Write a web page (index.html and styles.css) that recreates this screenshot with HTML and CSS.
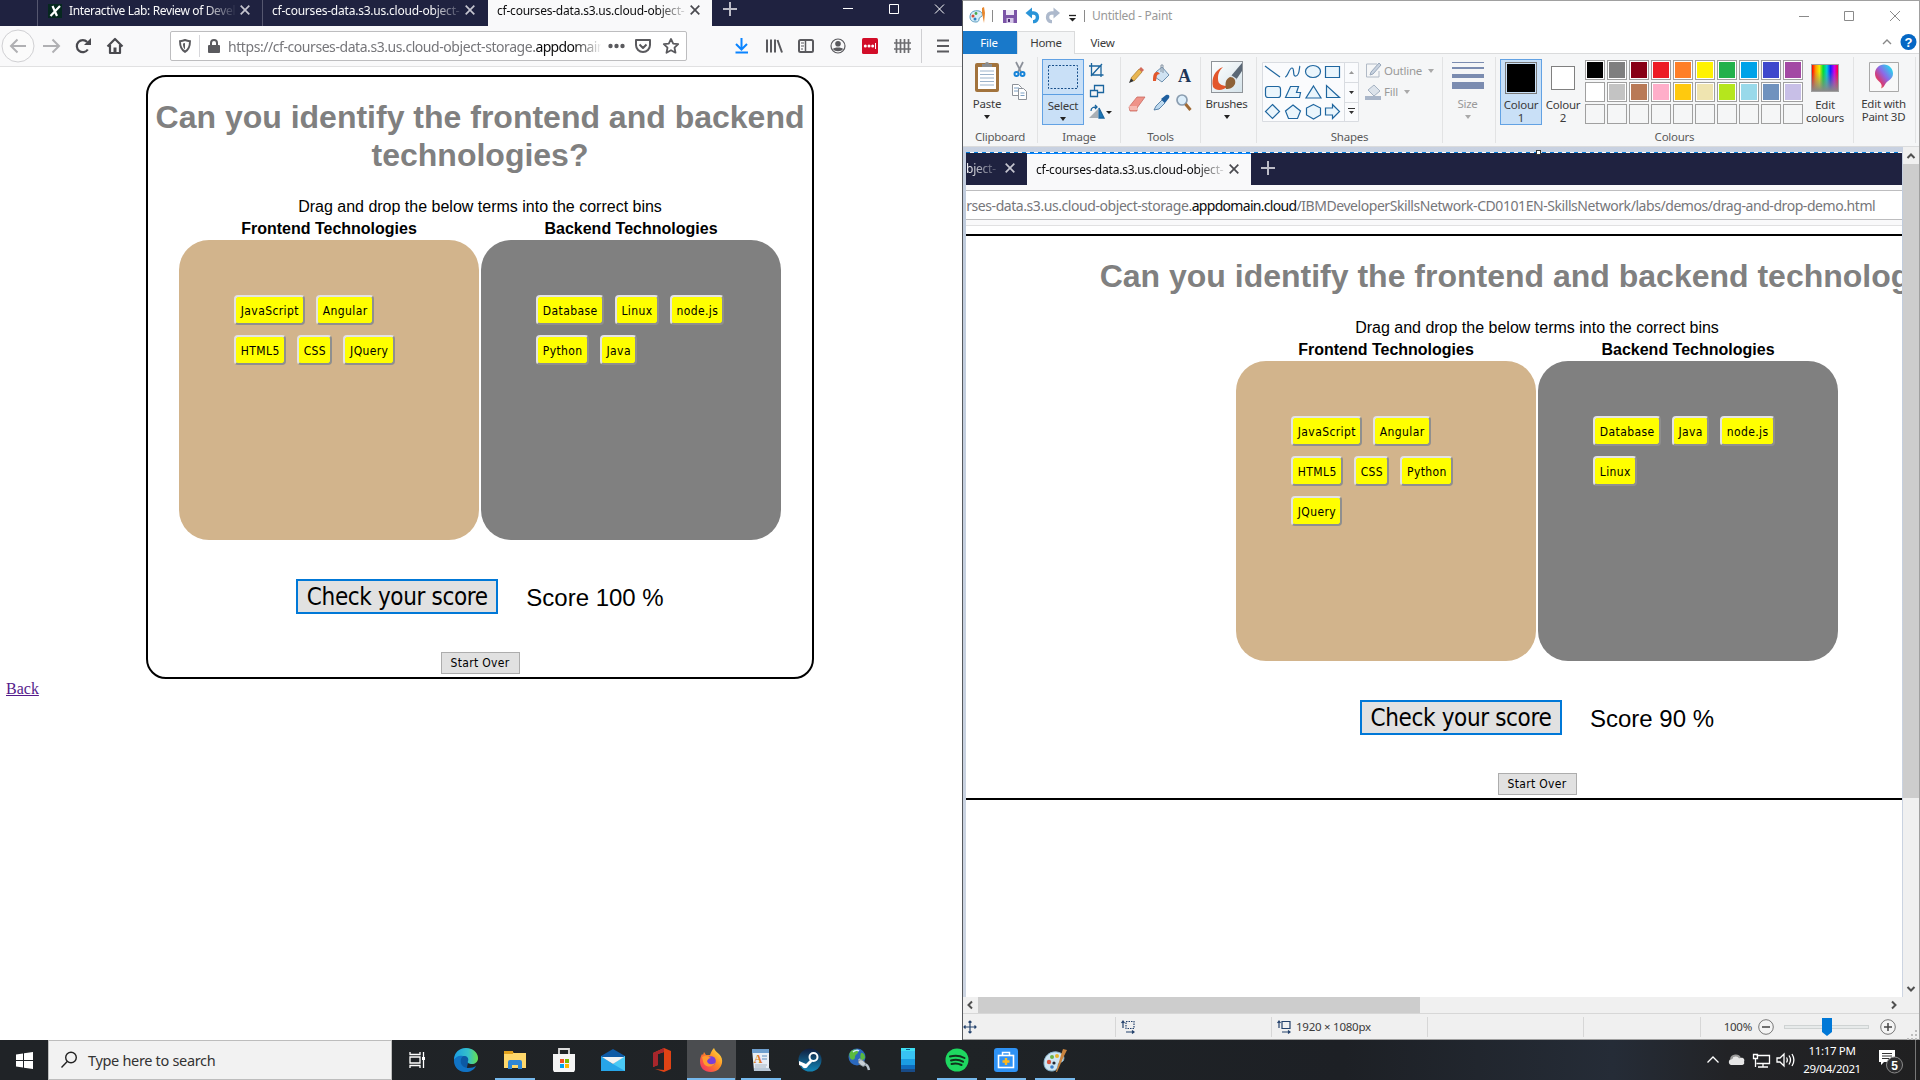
FILE: index.html
```html
<!DOCTYPE html>
<html lang="en">
<head>
<meta charset="utf-8">
<title>Desktop</title>
<link rel="stylesheet" href="styles.css">
</head>
<body>
<main class="desktop">
  <section class="browser">
    <div class="tabbar">
      <div class="tab tab-lead"></div>
      <div class="tab tab-first">
        <svg class="favicon" width="14" height="14" viewBox="0 0 14 14"><rect width="14" height="14" fill="#06281f"/><path d="M4.500 2l4.500 10M12 2L2.500 12" stroke="#fff" stroke-width="2.200"/></svg>
        <span class="tab-text t1">Interactive Lab: Review of Devel</span>
        <svg class="x" width="10" height="10" viewBox="0 0 10 10"><path d="M.7.7l8.600 8.600M9.300.7L.7 9.300"/></svg>
      </div>
      <div class="tab">
        <span class="tab-text">cf-courses-data.s3.us.cloud-object-</span>
        <svg class="x" width="10" height="10" viewBox="0 0 10 10"><path d="M.7.7l8.600 8.600M9.300.7L.7 9.300"/></svg>
      </div>
      <div class="tab tab-on">
        <span class="tab-text">cf-courses-data.s3.us.cloud-object-</span>
        <svg class="x" width="10" height="10" viewBox="0 0 10 10"><path d="M.7.7l8.600 8.600M9.300.7L.7 9.300"/></svg>
      </div>
      <svg class="plus" width="14" height="14" viewBox="0 0 14 14"><path d="M7 0v14M0 7h14"/></svg>
      <svg class="winctl" width="102" height="10" viewBox="0 0 102 10"><path d="M0 4.500h10M46.500.5h9v9h-9zM92 .5l9 9M101 .5l-9 9"/></svg>
    </div>
    <div class="navbar">
      <svg class="navicons" width="130" height="34" viewBox="0 0 130 34" fill="none">
        <circle cx="17" cy="17" r="16" fill="#fbfbfb" stroke="#d0d0d3"/>
        <path d="M25 17H10.500M16.500 10.500L10 17l6.500 6.500" stroke="#b0b0b3" stroke-width="2"/>
        <path d="M42 17h15.500M51.500 10.500L58 17l-6.500 6.500" stroke="#b0b0b3" stroke-width="2"/>
        <path d="M86.800 20.500a6 6 0 1 1-.6-7.500" stroke="#4a4a4f" stroke-width="2.200"/><path d="M83 16h7V9z" fill="#4a4a4f"/>
        <path d="M106.500 17.500l7.500-7.500 7.500 7.500M109 16v8h10v-8" stroke="#4a4a4f" stroke-width="2.200" stroke-linejoin="round"/><path d="M112.500 24v-5.500h3V24z" fill="#4a4a4f"/>
      </svg>
      <div class="urlbox">
        <svg width="12" height="14" viewBox="0 0 12 14"><path d="M1 2.200C3 2 4.500 1.600 6 1c1.500.6 3 1 5 1.200 0 5-.8 8.300-5 10.600C1.800 10.500 1 7.200 1 2.200z" fill="none" stroke="#5a5a5e" stroke-width="1.900"/><path d="M6 4v6.500C4.400 9 4 7 4 4.500z" fill="#5a5a5e"/></svg>
        <i class="urlsep"></i>
        <svg width="12" height="14" viewBox="0 0 12 14"><path d="M3 7V4a3 3 0 0 1 6 0v3" fill="none" stroke="#5a5a5e" stroke-width="2"/><rect y="6" width="12" height="8" rx="1" fill="#5a5a5e"/></svg>
        <span class="url"><span>https://cf-courses-data.s3.us.cloud-object-storage.</span><b>appdomain</b></span>
        <svg class="urlicons" width="74" height="18" viewBox="0 0 74 18"><g fill="#5a5a5e"><circle cx="3.500" cy="9" r="2.200"/><circle cx="9.500" cy="9" r="2.200"/><circle cx="15.500" cy="9" r="2.200"/></g><g fill="none" stroke="#5a5a5e" stroke-width="2" stroke-linejoin="round"><path d="M29 3h14v5a7 7 0 0 1-14 0zM32.500 7.500L36 11l3.500-3.500"/><path d="M64 2l2.200 4.600 5 .6-3.700 3.500 1 5L64 13.200l-4.500 2.500 1-5-3.700-3.500 5-.6z" stroke-width="1.800"/></g></svg>
      </div>
      <svg class="toolicons" width="224" height="34" viewBox="0 0 224 34" fill="none" stroke="#5a5a5e" stroke-width="2">
        <path d="M11.500 9v11M6 15l5.500 5.500L17 15M5.500 23.500h12.500" stroke="#0a84ff"/>
        <path d="M37 10.500v13M41 10.500v13M45 10.500v13M47.500 11l4.500 12.500"/>
        <rect x="69" y="11" width="14" height="12" rx="1.500"/><path d="M75.500 11v12" stroke-width="1.500"/><path d="M71 14h3M71 17h3M71 20h2" stroke-width="1.200"/>
        <circle cx="108" cy="17" r="7" stroke-width="1.200"/><circle cx="108" cy="14.700" r="2.800" fill="#5a5a5e" stroke="none"/><path d="M103 20c1-2 9-2 10 0-1.500 3-8.500 3-10 0z" fill="#5a5a5e" stroke="none"/>
        <rect x="132" y="9" width="16" height="16" rx="1.500" fill="#d20d28" stroke="none"/><g fill="#fff" stroke="none"><circle cx="135.300" cy="17" r="1.500"/><circle cx="139" cy="17" r="1.500"/><circle cx="142.700" cy="17" r="1.500"/><path d="M145 14h1v6h-1z"/></g>
        <path d="M166.500 10v14M170.500 10v14M174.500 10v14M178.500 10v14M164 14h17M164 20h17" stroke-width="1.700" stroke="#6d6d70"/>
        <path d="M191.500 0v34" stroke="#cfcfd2" stroke-width="1"/>
        <path d="M207 11.500h12M207 17h12M207 22.500h12"/>
      </svg>
    </div>
    <div class="page">
      <div class="quiz">
        <h1>Can you identify the frontend and backend<br>technologies?</h1>
        <p>Drag and drop the below terms into the correct bins</p>
        <div class="bins">
          <div class="col"><h2>Frontend Technologies</h2><div class="bin tan"><span class="chip">JavaScript</span><span class="chip">Angular</span><span class="chip">HTML5</span><span class="chip">CSS</span><span class="chip">JQuery</span></div></div>
          <div class="col"><h2>Backend Technologies</h2><div class="bin gray"><span class="chip">Database</span><span class="chip">Linux</span><span class="chip">node.js</span><span class="chip">Python</span><span class="chip">Java</span></div></div>
        </div>
        <div class="scorerow"><button class="check">Check your score</button><span>Score 100 %</span></div>
        <button class="again">Start Over</button>
      </div>
      <a class="back">Back</a>
    </div>
  </section>

  <section class="paint">
    <div class="titlebar">
      <svg class="qat" width="120" height="22" viewBox="0 0 120 22">
        <path d="M2 12c0-5 4-7 9-6 3 1 4 3 3 5-1 1.500-3 1-3 3 0 2-1 3-3 3-4 0-6-2-6-5z" fill="#d7edf8" stroke="#5a9cc0"/><circle cx="5" cy="11" r="1.500" fill="#d84a3a"/><circle cx="8" cy="8.500" r="1.400" fill="#49a84c"/><circle cx="7" cy="14" r="1.500" fill="#2d83c6"/><path d="M14 3l2-1 1 6-1 10-2-10z" fill="#e8872e"/>
        <path d="M24.500 5v12" stroke="#8a8a8a"/>
        <path d="M35 5h14v13H35z" fill="#7c55a7"/><path d="M38 5h8v5h-8z" fill="#eee8f6"/><path d="M38.500 13h7v5h-7z" fill="#d5c7e8"/><path d="M40 14h2v3h-2z" fill="#503078"/>
        <path d="M61 8h4.500a3.700 4.300 0 0 1 .5 8.600h-1" fill="none" stroke="#2a94d8" stroke-width="3.400"/><path d="M57.500 8l6.500-5.500v11z" fill="#2a94d8"/>
        <path d="M88 8h-4.500a3.700 4.300 0 0 0-.5 8.600h1" fill="none" stroke="#adb9cc" stroke-width="3.400"/><path d="M92 8l-6.500-5.500v11z" fill="#adb9cc"/>
        <path d="M101 10.500h7" stroke="#222" stroke-width="1.300"/><path d="M101 13h7l-3.500 3.500z" fill="#222"/>
        <path d="M116.500 5v12" stroke="#8a8a8a"/>
      </svg>
      <span class="ui title">Untitled - Paint</span>
      <svg class="pctl" width="102" height="12" viewBox="0 0 102 12" fill="none" stroke="#8a8a8a"><path d="M0 6.500h10M45.500 1.500h9v9h-9zM91 1l10 10M101 1L91 11"/></svg>
    </div>
    <div class="rtabs">
      <span class="ui file">File</span><span class="ui home">Home</span><span class="ui view">View</span>
      <svg class="help" width="36" height="18" viewBox="0 0 36 18"><path d="M2 11l4-4 4 4" fill="none" stroke="#888" stroke-width="1.400"/><circle cx="27.500" cy="9" r="8" fill="#0567c4"/><text x="27.500" y="14" text-anchor="middle" class="q">?</text></svg>
    </div>
    <div class="ribbon">
      <div class="grp g-clip">
        <div class="rbody">
          <div class="big">
            <svg width="26" height="34" viewBox="0 0 26 34"><rect x="1" y="4" width="24" height="29" rx="2" fill="#a2733c"/><path d="M4 8h18v22H4z" fill="#fff"/><path d="M6 12h14M6 15.500h14M6 19h14M6 22.500h14M6 26h14" stroke="#9cb3ca"/><path d="M8 8V5h3a2 2 0 0 1 4 0h3v3z" fill="#8a8d90"/></svg>
            <span class="ui">Paste</span><i class="dn"></i>
          </div>
          <svg class="side" width="18" height="44" viewBox="0 0 18 44"><path d="M5 2l5 10M12 2L7 12" stroke="#8b9099" stroke-width="1.700"/><g fill="none" stroke="#1683d8" stroke-width="2"><circle cx="5.500" cy="14" r="2"/><circle cx="11.500" cy="14" r="2"/></g><g fill="#fff" stroke="#8d9299"><path d="M1.500 24.500h6l3 3v8h-9z"/><path d="M7.500 28.500h5l3 3v8h-8z"/></g><path d="M3 28h5M3 31h4M9.500 33h4M9.500 35.500h4" stroke="#7da0c4"/></svg>
        </div>
        <span class="ui lbl">Clipboard</span>
      </div>
      <div class="grp g-image">
        <div class="rbody">
          <div class="big on">
            <svg width="40" height="36" viewBox="0 0 40 36"><rect x="5.500" y="6.500" width="29" height="23" fill="none" stroke="#174f8a" stroke-dasharray="2 1.500"/><path d="M0 35.500h40" stroke="#5b9ee2"/></svg>
            <span class="ui">Select</span><i class="dn"></i>
          </div>
          <svg class="side2" width="26" height="62" viewBox="0 0 26 62" fill="none" stroke="#1b659e" stroke-width="1.300"><path d="M3.500 2v12h12M1 5h12v11M3 15L14 3"/><path d="M6.500 24.500h9v7h-9z"/><path d="M2.500 29.500h7v6h-7z" fill="#f5f6f7"/><path d="M1 57l9-9v9z" fill="#a9afb5" stroke="none"/><path d="M11 47v10h5z" fill="#1b77b8"/><path d="M3 50c0-4 3-4 6-4M7 44l2 2-2 2"/><path d="M18 50h6l-3 3z" fill="#222" stroke="none"/></svg>
        </div>
        <span class="ui lbl">Image</span>
      </div>
      <div class="grp g-tools">
        <svg width="66" height="62" viewBox="0 0 66 62">
          <path d="M1 26l2-5 3 3z" fill="#333"/><path d="M3 21l8-9 3 3-8 9z" fill="#e9b651" stroke="#a87a2c" stroke-width=".7"/><path d="M11 12l2-2 3 3-2 2z" fill="#d46a5a"/>
          <path d="M28 15l6-5 7 8-7 7-7-5z" fill="#cfe2f2" stroke="#6c8fae"/><path d="M25 24c0-7 1-9 5-9l2 2c-4 0-3 3-4 7z" fill="#e2572c"/><path d="M33 15V8h2v8" fill="none" stroke="#8694a3"/>
          <text x="56.500" y="25" text-anchor="middle" class="bigA">A</text>
          <path d="M1 50l8-10h8l-8 11v3H2z" fill="#ef9389" stroke="#c96a61" stroke-width=".8"/><path d="M1 49h8v4H2z" fill="#f7bab2"/>
          <path d="M26 53l2-4 6-6 3 3-6 6z" fill="#bdd9ef" stroke="#3c6c98" stroke-width=".8"/><path d="M33 42l5-4c3-1 4 1 3 3l-4 5z" fill="#1f5f9f"/>
          <circle cx="54" cy="43" r="5" fill="#dceefb" stroke="#8a9db0" stroke-width="1.700"/><path d="M57.500 47l5 6" stroke="#a06a35" stroke-width="3"/>
        </svg>
        <span class="ui lbl">Tools</span>
      </div>
      <div class="grp g-brush">
        <div class="big">
          <svg width="32" height="34" viewBox="0 0 32 34"><defs><linearGradient id="bb" x2="1" y2="1"><stop stop-color="#fff"/><stop offset="1" stop-color="#d5e3ea"/></linearGradient></defs><rect x=".5" y="2.500" width="31" height="31" fill="url(#bb)" stroke="#8f9499"/><path d="M12 8C4 11 0 19 2 28c3 4 10 4 15-1-5 0-10-1-10-7 0-5 1-8 5-12z" fill="#e2562b"/><path d="M31 4L20 17l5 4 6-9z" fill="#5b6876"/><path d="M20 16l6 4-2 3-6-4z" fill="#dde3e8"/><path d="M15 30c-1-4-1-10 4-12 4 0 6 3 5 7-2 4-5 5-9 5z" fill="#8d6238"/></svg>
          <span class="ui">Brushes</span><i class="dn"></i>
        </div>
      </div>
      <div class="grp g-shapes">
        <div class="rbody">
          <svg width="98" height="60" viewBox="0 0 98 60"><path d="M.5.500h96v59H.5zM82.500 0v60M82.500 20.500h14M82.500 40.500h14" fill="#fafbfd" stroke="#d9dce1"/><g fill="#eaf5fc" stroke="#1f669f" stroke-width="1.200"><path d="M3 4l15 11"/><path d="M23 15c3 0 4-9 7-9s0 9 4 8 3-9 4-10" fill="none"/><ellipse cx="51" cy="9.500" rx="7.500" ry="6"/><path d="M63.500 4.500h14v11h-14z"/><rect x="3.500" y="24.500" width="15" height="11" rx="2.500"/><path d="M23.500 35.500l5-11h8l-2 6h4l-1 5z"/><path d="M51.500 24l7.500 12H44z"/><path d="M64.500 23.500v12h13z"/><path d="M10.500 42.500l7 7-7 7-7-7z"/><path d="M31 43l7.500 6-3 7.500h-9l-3-7.500z"/><path d="M51.500 42.500l7 3.500v7l-7 4-7-4v-7z"/><path d="M63.500 46h7v-3.500l7 7-7 7V53h-7z"/></g><path d="M87 12h5l-2.500-3z" fill="#999"/><path d="M87 29h5l-2.500 3zM87 49h5l-2.500 3z" fill="#333"/><path d="M86 46.500h7" stroke="#333"/></svg>
          <div class="ofcol">
            <div class="of"><svg width="18" height="17" viewBox="0 0 18 17"><path d="M12 2H1.500v13H14V9" fill="none" stroke="#b1bac6"/><path d="M5 13l1-3 8-9 2 2-8 9z" fill="#c8d2df" stroke="#99a8bb"/></svg><span class="ui dim">Outline</span><i class="dn d"></i></div>
            <div class="of"><svg width="18" height="17" viewBox="0 0 18 17"><path d="M3 7l6-5 6 6-6 5z" fill="#dce3eb" stroke="#a5b2c2"/><path d="M1 12h3M0 13h16v4H0z" fill="#a9b6c9"/></svg><span class="ui dim">Fill</span><i class="dn d"></i></div>
          </div>
        </div>
        <span class="ui lbl">Shapes</span>
      </div>
      <div class="grp g-size">
        <div class="big"><svg width="32" height="34" viewBox="0 0 32 34"><path d="M0 3h32v1H0zM0 8h32v2H0zM0 15h32v4H0zM0 23h32v7H0z" fill="#7b8cb0"/></svg><span class="ui dim">Size</span><i class="dn d"></i></div>
      </div>
      <div class="grp g-col">
        <div class="rbody">
          <div class="big on"><i class="sw1"></i><span class="ui">Colour</span><span class="ui">1</span></div>
          <div class="big c2"><i class="sw2"></i><span class="ui">Colour</span><span class="ui">2</span></div>
          <div class="palette">
            <i style="background:#000"></i><i style="background:#7f7f7f"></i><i style="background:#880015"></i><i style="background:#ed1c24"></i><i style="background:#ff7f27"></i><i style="background:#fff200"></i><i style="background:#22b14c"></i><i style="background:#00a2e8"></i><i style="background:#3f48cc"></i><i style="background:#a349a4"></i>
            <i style="background:#fff"></i><i style="background:#c3c3c3"></i><i style="background:#b97a57"></i><i style="background:#ffaec9"></i><i style="background:#ffc90e"></i><i style="background:#efe4b0"></i><i style="background:#b5e61d"></i><i style="background:#99d9ea"></i><i style="background:#7092be"></i><i style="background:#c8bfe7"></i>
            <i class="e"></i><i class="e"></i><i class="e"></i><i class="e"></i><i class="e"></i><i class="e"></i><i class="e"></i><i class="e"></i><i class="e"></i><i class="e"></i>
          </div>
          <div class="big ec"><i class="rainbow"></i><span class="ui">Edit</span><span class="ui">colours</span></div>
        </div>
        <span class="ui lbl">Colours</span>
      </div>
      <div class="grp g-3d">
        <div class="big"><svg width="30" height="34" viewBox="0 0 30 34"><defs><linearGradient id="p3" x1="1" y1="0" x2="0" y2="1"><stop offset=".1" stop-color="#21dcee"/><stop offset=".45" stop-color="#8b6be8"/><stop offset=".7" stop-color="#d43a78"/><stop offset="1" stop-color="#ffb52b"/></linearGradient></defs><path d="M.5 3.500h29v29H.5z" fill="#f8f8f8" stroke="#a9a9a9"/><path d="M15 5.500c5 0 9 4 9 9 0 6-5 6-8 11-1 2-2 3-4 4 2-4-1-6-3-8-2-2-3-4-3-7 0-5 4-9 9-9z" fill="url(#p3)"/></svg><span class="ui">Edit with</span><span class="ui">Paint 3D</span></div>
      </div>
    </div>
    <div class="workspace">
      <div class="view-area">
        <i class="handle"></i>
        <div class="canvas">
          <div class="tabbar">
            <div class="tab tab-cut"><span class="tab-text">bject-</span><svg class="x" width="10" height="10" viewBox="0 0 10 10"><path d="M.7.7l8.600 8.600M9.300.7L.7 9.300"/></svg></div>
            <div class="tab tab-on"><span class="tab-text">cf-courses-data.s3.us.cloud-object-</span><svg class="x" width="10" height="10" viewBox="0 0 10 10"><path d="M.7.7l8.600 8.600M9.300.7L.7 9.300"/></svg></div>
            <svg class="plus" width="14" height="14" viewBox="0 0 14 14"><path d="M7 0v14M0 7h14"/></svg>
          </div>
          <div class="navbar"><div class="urlwide"><span class="url"><span>urses-data.s3.us.cloud-object-storage.</span><b>appdomain.cloud</b><span>/IBMDeveloperSkillsNetwork-CD0101EN-SkillsNetwork/labs/demos/drag-and-drop-demo.html</span></span></div></div>
          <div class="quiz wide">
            <h1>Can you identify the frontend and backend technologies?</h1>
            <p>Drag and drop the below terms into the correct bins</p>
            <div class="bins">
              <div class="col"><h2>Frontend Technologies</h2><div class="bin tan"><span class="chip">JavaScript</span><span class="chip">Angular</span><span class="chip">HTML5</span><span class="chip">CSS</span><span class="chip">Python</span><span class="chip">JQuery</span></div></div>
              <div class="col"><h2>Backend Technologies</h2><div class="bin gray"><span class="chip">Database</span><span class="chip">Java</span><span class="chip">node.js</span><span class="chip">Linux</span></div></div>
            </div>
            <div class="scorerow"><button class="check">Check your score</button><span>Score 90 %</span></div>
            <button class="again">Start Over</button>
          </div>
        </div>
      </div>
      <div class="vscroll">
        <svg width="16" height="17" viewBox="0 0 16 17"><path d="M4.500 11L8 7.500l3.500 3.500" fill="none" stroke="#505050" stroke-width="2"/></svg>
        <i></i>
        <svg class="end" width="16" height="17" viewBox="0 0 16 17"><path d="M4.500 7L8 10.500 11.500 7" fill="none" stroke="#505050" stroke-width="2"/></svg>
      </div>
    </div>
    <div class="hscroll">
      <svg width="14" height="16" viewBox="0 0 14 16"><path d="M8 4.500L4.500 8 8 11.500" fill="none" stroke="#505050" stroke-width="2"/></svg>
      <i></i>
      <svg class="end" width="16" height="16" viewBox="0 0 16 16"><path d="M6 4.500L9.500 8 6 11.500" fill="none" stroke="#505050" stroke-width="2"/></svg>
    </div>
    <div class="status">
      <div class="cell c-a"><svg width="14" height="14" viewBox="0 0 14 14" fill="none" stroke="#24426c" stroke-width="1.200"><path d="M7 1v12M1 7h12M5.500 2.500L7 1l1.500 1.500M5.500 11.500L7 13l1.500-1.500M2.500 5.500L1 7l1.500 1.500M11.500 5.500L13 7l-1.500 1.500"/></svg></div>
      <div class="cell"><svg width="15" height="14" viewBox="0 0 15 14" fill="none" stroke="#24426c" stroke-width="1.200"><path d="M2 1v7M.5 3L2 1l1.500 2M5 12h8M11 10.500l2 1.500-2 1.500"/><path d="M5 1.500h8v7H5z" stroke-dasharray="1.500 1"/></svg></div>
      <div class="cell"><svg width="15" height="14" viewBox="0 0 15 14" fill="none" stroke="#24426c" stroke-width="1.200"><path d="M2 1v7M.5 3L2 1l1.500 2M5 12h8M11 10.500l2 1.500-2 1.500M5 1.500h8v7H5z"/></svg><span class="ui px">1920 × 1080px</span></div>
      <div class="cell"></div>
      <div class="cell c-e"></div>
      <div class="zoom"><span class="ui px">100%</span>
        <svg width="167" height="26" viewBox="0 0 167 26"><g fill="#f4f4f4" stroke="#777"><circle cx="14" cy="13" r="7.300"/><circle cx="136" cy="13" r="7.300"/></g><path d="M10 13h8M132 13h8M136 9v8" stroke="#444" stroke-width="1.500"/><rect x="32.500" y="11.500" width="84" height="3" fill="#e7eaea" stroke="#cfd3d3"/><path d="M70 4h10v14l-5 4-5-4z" fill="#0078d7"/><path d="M163 16h2v2h-2zM163 20h2v2h-2zM163 24h2v2h-2zM159 20h2v2h-2zM159 24h2v2h-2zM155 24h2v2h-2z" fill="#bcbcbc"/></svg>
      </div>
    </div>
  </section>

  <footer class="taskbar">
    <div class="start"><svg width="17" height="17" viewBox="0 0 17 17" fill="#fff"><path d="M0 2.500l7-1V8H0zM8 1.300L17 0v8H8zM0 9h7v6.500l-7-1zM8 9h9v8l-9-1.300z"/></svg></div>
    <div class="search"><svg width="18" height="18" viewBox="0 0 18 18" fill="none" stroke="#222" stroke-width="1.400"><circle cx="11" cy="6.500" r="5.300"/><path d="M7.200 10.500L1.500 16.500"/></svg><span>Type here to search</span></div>
    <div class="apps">
      <div class="app"><svg width="18" height="18" viewBox="0 0 18 18" fill="none" stroke="#fff" stroke-width="1.300"><path d="M2 1v2.500h10V1M2 17v-2.500h10V17M2 6h10v6H2zM15.500 1v16"/><path d="M14 6h3v3h-3z" fill="#fff" stroke="none"/></svg></div>
      <div class="app"><svg width="24" height="24" viewBox="0 0 24 24"><defs><linearGradient id="e1" x2="1"><stop stop-color="#1b9de2"/><stop offset=".6" stop-color="#35c1c9"/><stop offset="1" stop-color="#67e04b"/></linearGradient></defs><circle cx="12" cy="12" r="12" fill="#0c59a4"/><path d="M12 24c7 0 10-3 11-6 2-4 1-2 1-6l-9-2z" fill="#202327"/><path d="M0 12C0 4 6 0 12 0s12 4 12 10c0 4-3 6-6 6-3 0-5-1-4-3 1-3-1-5-4-5C5 8 2 10 0 12z" fill="url(#e1)"/><path d="M0 12c2-4 6-5 9-4-4 3-3 12 5 12 4 0 6-1 8-2-2 4-6 6-10 6C5 24 0 20 0 12z" fill="#1173c4"/></svg></div>
      <div class="app run"><svg width="22" height="20" viewBox="0 0 22 20"><path d="M0 1h8l2 2H0z" fill="#d89614"/><path d="M0 3h22v15H0z" fill="#ffd86b"/><path d="M0 1h9v3H0z" fill="#e2a21d"/><path d="M4 19v-7q0-2 2-2h10q2 0 2 2v7h-4v-4H8v4z" fill="#2f86d6"/></svg></div>
      <div class="app"><svg width="24" height="24" viewBox="0 0 24 24"><path d="M7 8V1h10v7" fill="none" stroke="#ddd" stroke-width="1.800"/><path d="M1 6h22v16l-1 2H2l-1-2z" fill="#f5f5f5"/><path d="M8 11h4v4H8z" fill="#f25022"/><path d="M13 11h4v4h-4z" fill="#7fba00"/><path d="M8 16h4v4H8z" fill="#00a4ef"/><path d="M13 16h4v4h-4z" fill="#ffb900"/></svg></div>
      <div class="app"><svg width="24" height="24" viewBox="0 0 24 24"><path d="M0 8l12-7 12 7v6H0z" fill="#0f5aa5"/><path d="M0 8l12 8 12-8v15H0z" fill="#27a5e8"/><path d="M24 8v15L12 16z" fill="#4ac9f5"/><path d="M1 9h22l-11 7z" fill="#f3f3f3"/></svg></div>
      <div class="app"><svg width="20" height="24" viewBox="0 0 20 24"><path d="M12 0l7 3v18l-7 3-9-3 9 1V4L6 6v11l-5 2V5z" fill="#df4315"/><path d="M12 0v4L6 6v11l-5 2V5z" fill="#a8262c"/></svg></div>
      <div class="app run active"><svg width="24" height="24" viewBox="0 0 24 24"><defs><linearGradient id="ff" x1="1" y1="0" x2="0" y2="1"><stop stop-color="#fff04a"/><stop offset=".45" stop-color="#ff8a22"/><stop offset="1" stop-color="#f0246c"/></linearGradient></defs><path d="M15 0c1 3 3 4 5 6 3 3 3.500 6 3 9-1 5-5 9-11 9C5 24 1 20 1 13c0-3 1-5 2-7l1 1 1-3 2 3h4c1-3 2-5 4-7z" fill="url(#ff)"/><circle cx="12" cy="13" r="4.800" fill="#7a3fd8"/><path d="M3 9c3-2 6-1 9 1-2 0-3 1-4 3 1 4 5 4 8 2-2 5-11 5-12-2z" fill="#ff9a2e"/></svg></div>
      <div class="app run"><svg width="20" height="24" viewBox="0 0 20 24"><path d="M1 1h17v19l2 3H3z" fill="#e8eef5"/><path d="M1 1h17v4H1z" fill="#6e9fcf"/><text x="7" y="15" text-anchor="middle" class="wp">A</text><path d="M11 8h5M11 11h5" stroke="#5b8cc0"/><path d="M4 17h12M4 19h11" stroke="#a9b6c4"/><path d="M3 20h15l2 3H3z" fill="#b9c7d6"/></svg></div>
      <div class="app"><svg width="24" height="24" viewBox="0 0 24 24"><defs><linearGradient id="st" x2="0" y2="1"><stop stop-color="#111d3d"/><stop offset="1" stop-color="#1387b8"/></linearGradient></defs><circle cx="12" cy="12" r="11.500" fill="url(#st)"/><circle cx="15.500" cy="9" r="4" fill="none" stroke="#fff" stroke-width="2"/><path d="M1 13l7 3 4-4 3 1-5 5c-1 3-5 3-6 0l-3-1z" fill="#fff"/></svg></div>
      <div class="app"><svg width="24" height="24" viewBox="0 0 24 24"><circle cx="10" cy="9" r="8.500" fill="#2a68bd"/><path d="M4 3c3-2 6-2 7 0 1 3-3 3-3 6s-3 4-5 1c-1-3-1-5 1-7zM14 5c3 0 4 2 4 5l-3 3c-2-2-2-5-1-8z" fill="#5bbb3f"/><path d="M6 4c2-2 5-2 6-1" stroke="#cfeaff" stroke-width="1.500" fill="none"/><path d="M12 11l4 5c4 0 5 2 6 6" fill="none" stroke="#b9c3cc" stroke-width="2.500"/><ellipse cx="15" cy="15" rx="4" ry="2.500" transform="rotate(40 15 15)" fill="#c9d1d8" stroke="#7f8a94" stroke-width=".8"/></svg></div>
      <div class="app"><svg width="14" height="24" viewBox="0 0 14 24"><path d="M0 0h14v24H0z" fill="#38c3f3"/><path d="M0 0h14v3H0z" fill="#3fe0f5"/><path d="M0 11h14v6H0z" fill="#1b9de2"/><path d="M0 17h14v4H0z" fill="#0f6cbd"/><path d="M0 21h14v3H0z" fill="#184b87"/><path d="M5 1.500h4" stroke="#0c5e90"/></svg></div>
      <div class="app run"><svg width="24" height="24" viewBox="0 0 24 24"><circle cx="12" cy="12" r="11.500" fill="#1ed760"/><path d="M5 8.500c5-1.500 10-1 14.500 1.500M6 12.500c4-1.200 8.500-.8 12 1.200M6.500 16c3.500-.9 7-.6 10 1" fill="none" stroke="#11301c" stroke-width="2" stroke-linecap="round"/></svg></div>
      <div class="app run"><svg width="24" height="24" viewBox="0 0 24 24"><rect width="24" height="24" rx="3" fill="#2e92f5"/><path d="M8.500 7V4.500h7V7" fill="none" stroke="#fff" stroke-width="1.500"/><rect x="4.500" y="7.500" width="15" height="12" fill="#2e92f5" stroke="#fff" stroke-width="1.600"/><path d="M12 10v7M8.500 13.500h7" stroke="#ffb81c" stroke-width="2.400"/></svg></div>
      <div class="app run"><svg width="24" height="24" viewBox="0 0 24 24"><path d="M1 15C1 8 7 3 14 4c7 1 8 6 6 9-2 2-5 1-5 4s-2 6-6 6c-5 0-8-3-8-8z" fill="#cfe6f3" stroke="#87b2cc"/><circle cx="6" cy="14" r="2.200" fill="#d9533e"/><circle cx="9" cy="9" r="2" fill="#6bb348"/><circle cx="14" cy="8" r="2" fill="#e8b42c"/><circle cx="11" cy="15" r="1.600" fill="#252a33"/><circle cx="9" cy="19" r="1.800" fill="#3c7fc8"/><path d="M20 1l4 1-3 6-7 16-1 0 5-17z" fill="#c9843f"/></svg></div>
    </div>
    <div class="tray">
      <svg width="90" height="20" viewBox="0 0 90 20" fill="none" stroke="#fff" stroke-width="1.300"><path d="M1.500 12.500L7 7l5.500 5.500"/><path d="M25 15c-3-1-3-6 1-6 1-4 6-5 8-1 4-1 5 2 4 4 1 2-1 3-2 3z" fill="#e6e6e6" stroke="none"/><path d="M25 9c1-4 7-5 9-1" stroke="#9a9a9a" stroke-width="2"/><path d="M50.500 5.500h13v8h-13M57 14v3M52 17h10M47.500 4.500h4v4h-4zM49.500 9v8"/><path d="M71 8h3l4-4v12l-4-4h-3zM80.500 7.500c1 1.500 1 3.500 0 5M83 5.500c2 3 2 6 0 9M86 4c2.500 4 2.500 8 0 12"/></svg>
      <div class="clock"><span>11:17 PM</span><span>29/04/2021</span></div>
      <svg class="note" width="28" height="28" viewBox="0 0 28 28"><path d="M1 4h16v12H6l-3 3v-3H1z" fill="#fff"/><path d="M4 7.500h10M4 10h10M4 12.500h7" stroke="#333"/><circle cx="16.500" cy="19" r="8" fill="#2d2d2f" stroke="#8a8a8a"/><text x="16.500" y="23.500" text-anchor="middle" class="badge">5</text></svg>
    </div>
  </footer>
</main>
</body>
</html>
```
FILE: styles.css
```css
* { box-sizing: border-box; }
body { margin: 0; overflow: hidden; background: #fff; font-family: "Liberation Sans", Arial, sans-serif; }
svg { display: block; flex: none; }
i { display: block; flex: none; }
.desktop { width: 1920px; height: 1080px; display: grid; grid-template: 1040px 40px / 962px 958px; overflow: hidden; }

/* Browser chrome */
.tabbar { display: flex; background: #1f2240; color: #f9f9fa; overflow: hidden; }
.browser { overflow: hidden; background: #fff; }
.browser .tabbar { height: 26px; }
.tab { width: 225px; flex: none; display: flex; align-items: center; padding: 0 12px 4px 9px; border-left: 1px solid #55576f; }
.tab-lead { width: 37px; border: 0; }
.tab-first { padding-left: 10px; }
.favicon { margin: 0 7px 0 0; }
.tab-text { flex: none; width: 190px; overflow: hidden; white-space: nowrap; font: 12px/18px "Noto Sans", sans-serif; letter-spacing: -.22px; -webkit-mask-image: linear-gradient(90deg, #000 160px, transparent 192px); mask-image: linear-gradient(90deg, #000 160px, transparent 192px); }
.t1 { width: 166px; letter-spacing: -.37px; -webkit-mask-image: linear-gradient(90deg, #000 135px, transparent 168px); mask-image: linear-gradient(90deg, #000 135px, transparent 168px); }
.x { margin-left: auto; margin-top: -2px; fill: none; stroke: #c5c5cf; stroke-width: 1.7; }
.tab-on { background: #f9f9fa; color: #0c0c0d; border: 0; }
.browser .tab-on { width: 224px; margin-left: 1px; }
.tab-on .x { stroke: #4a4a4f; }
.plus { margin: 2px 0 0 11px; fill: none; stroke: #bdbdc7; stroke-width: 2; }
.winctl { margin: 4px 0 0 106px; fill: none; stroke: #fff; }
.navbar { background: #f9f9fa; border-bottom: 1px solid #e1e1e2; }
.browser .navbar { height: 41px; display: flex; align-items: center; padding-left: 1px; }
.urlbox { width: 517px; height: 30px; margin-left: 39px; display: flex; align-items: center; padding-left: 8px; background: #fff; border: 1px solid #bdbdbf; border-radius: 2px; }
.urlsep { width: 1px; height: 22px; margin: 0 8px; background: #d7d7db; }
.url { white-space: nowrap; color: #76767a; font: 14px/20px "Noto Sans", sans-serif; letter-spacing: -.435px; }
.url b { font-weight: 400; color: #0c0c0d; letter-spacing: -.7px; }
.urlbox .url { margin-left: 8px; padding-top: 2px; width: 373px; overflow: hidden; -webkit-mask-image: linear-gradient(90deg, #000 345px, transparent 374px); mask-image: linear-gradient(90deg, #000 345px, transparent 374px); }
.urlicons { margin-left: 6px; }
.toolicons { margin-left: 43px; }

/* Quiz */
.page { padding: 8px 6px 0; }
.quiz { width: 668px; height: 604px; margin: 0 auto; border: 2px solid #000; border-radius: 20px; display: flex; flex-direction: column; align-items: center; white-space: nowrap; }
.page .quiz { margin-left: 140px; }
.quiz h1 { margin: 21px 0 0; font-size: 32px; line-height: 38px; color: gray; text-align: center; }
.quiz p { margin: 24px 0 0; font-size: 16px; line-height: 18px; }
.bins { display: flex; gap: 2px; margin-top: 4px; }
.col h2 { margin: 0 0 2px; font-size: 16px; line-height: 18px; text-align: center; }
.bin { width: 300px; height: 300px; border-radius: 30px; padding: 55px; display: flex; flex-wrap: wrap; gap: 10px 11px; align-content: flex-start; }
.tan { background: #d2b48c; }
.gray { background: gray; }
.chip { height: 30px; padding: 0 4.2px 0 4.8px; line-height: 28px; border: 2px outset #e3e3e3; border-radius: 4px; background: #ff0; font-family: "DejaVu Sans Condensed", "DejaVu Sans", sans-serif; font-size: 12px; font-stretch: condensed; letter-spacing: .39px; }
.scorerow { display: flex; align-items: center; gap: 28px; margin-top: 39px; height: 35px; font-size: 24px; }
.scorerow span { padding-top: 2px; }
button { padding: 0; color: #000; background: #e1e1e1; font-family: "DejaVu Sans Condensed", "DejaVu Sans", sans-serif; font-stretch: condensed; white-space: nowrap; }
.check { width: 202px; height: 35px; padding-top: 2px; border: 2px solid #0078d7; font-size: 24px; line-height: 29px; letter-spacing: -.36px; }
.again { width: 79px; height: 22px; margin-top: 38px; padding-top: 1px; border: 1px solid #adadad; font-size: 12px; line-height: 19px; letter-spacing: .32px; }
.back { display: block; font: 16px/20px "Liberation Serif", serif; color: #551a8b; text-decoration: underline; }

/* Paint */
.paint { display: flex; flex-direction: column; overflow: hidden; border-left: 1px solid #55585c; border-right: 1px solid #a0a0a0; border-top: 1px solid #a0a0a0; background: #fff; }
.ui { font: 11.5px/14px "Noto Sans", sans-serif; letter-spacing: -.25px; color: #3b3b3b; white-space: nowrap; }
.titlebar { height: 30px; display: flex; align-items: center; padding-left: 5px; }
.titlebar .title { color: #999; margin-left: 4px; font-size: 12px; }
.pctl { margin-left: auto; margin-right: 18px; }
.rtabs { height: 23px; display: flex; flex: none; line-height: 23px; border-bottom: 1px solid #dadbdc; }
.rtabs .ui { height: 23px; line-height: 24px; text-align: center; }
.rtabs .file { width: 54px; padding-right: 2px; background: #1979ca; color: #fff; }
.rtabs .home { width: 58px; background: #f5f6f7; border: 1px solid #dadbdc; border-bottom: 0; line-height: 22px; }
.rtabs .view { width: 55px; }
.help { margin: 2px 2px 0 auto; }
.q { font: bold 13px "Liberation Sans", sans-serif; fill: #fff; }
.ribbon { height: 93px; flex: none; display: flex; padding-top: 3px; background: #f5f6f7; border-bottom: 1px solid #dadbdc; }
.grp { height: 86px; flex: none; display: flex; flex-direction: column; align-items: center; border-right: 1px solid #e2e3e4; }
.rbody { display: flex; width: 100%; height: 72px; }
.grp .lbl { height: 14px; line-height: 16px; color: #5a5a5a; margin-top: auto; }
.big { width: 42px; height: 66px; margin-top: 2px; display: flex; flex-direction: column; align-items: center; flex: none; }
.big svg { margin-bottom: 4px; }
.big .ui { line-height: 13px; }
.on { background: #c9e0f7; border: 1px solid #62a2e4; }
.big.on svg { margin-top: -1px; }
.dn { border: 3.5px solid transparent; border-top: 4px solid #222; border-bottom: 0; margin-top: 5px; }
.dn.d { border-top-color: #a9a9a9; }
.g-clip { width: 75px; }
.g-clip .big { margin-left: 3px; }
.side { margin: 3px 0 0 3px; }
.g-image { width: 83px; }
.g-image .big { margin-left: 4px; }
.side2 { margin: 4px 0 0 4px; }
.g-tools { width: 80px; }
.bigA { font: bold 18px "Liberation Serif", serif; fill: #1d3557; }
.g-brush { width: 56px; }
.g-brush .big { margin-right: 4px; }
.g-shapes { width: 186px; }
.g-shapes .rbody { padding: 5px 0 0 5px; }
.ofcol { margin: -2px 0 0 5px; }
.of { display: flex; align-items: center; height: 21px; gap: 1px; }
.of .dn { margin: 0 0 0 5px; }
.dim { color: #9a9a9a; }
.g-size { width: 53px; }
.g-size .big { margin-right: 3px; }
.g-col { width: 358px; }
.g-col .rbody .big.on { margin-left: 4px; }
.sw1 { width: 32px; height: 32px; margin: 2px 0 4px; background: #000; border: 1px solid #7b7b7b; box-shadow: inset 0 0 0 1px #c9e0f7; }
.sw2 { width: 24px; height: 24px; margin: 7px 0 8px; background: #fff; border: 1px solid #808080; }
.palette { display: grid; grid-template-columns: repeat(10, 20px); grid-auto-rows: 20px; gap: 2px; margin: 3px 0 0 1px; height: 64px; }
.palette i { border: 1px solid #a0a0a0; box-shadow: inset 0 0 0 1px #fff; }
.palette .e { box-shadow: none; }
.ec { margin-left: 1px; }
.rainbow { width: 28px; height: 28px; margin: 5px 0 6px; border: 1px solid #a0a0a0; background: linear-gradient(0deg, #888, transparent 75%), linear-gradient(90deg, #f00, #f90, #ee0, #0d3, #0cd, #12f, #c0e, #f03); }
.g-3d { width: 62px; }
.g-3d .big { margin-right: 2px; }
.workspace { height: 850px; flex: none; display: flex; }
.view-area { width: 940px; padding: 5px 1px 0 3px; overflow: hidden; position: relative; background: linear-gradient(#c8d1e1, #c0ccdd 60px, #cdd5e2); }
.handle { position: absolute; left: 573px; top: 3px; width: 5px; height: 5px; background: #fff; border: 1px solid #333; z-index: 2; }
.canvas { height: 845px; background: #fff; overflow: hidden; display: flex; flex-direction: column; }
.canvas::before { content: ""; height: 1px; flex: none; background: repeating-linear-gradient(90deg, #0078d7 0 4px, #fff 4px 8px); }
.canvas .tabbar { height: 32px; flex: none; }
.canvas .tab { padding-bottom: 0; }
.tab-cut { width: 61px; border: 0; padding-left: 0; }
.tab-cut .tab-text { width: 34px; -webkit-mask-image: linear-gradient(90deg, #000, transparent 38px); mask-image: linear-gradient(90deg, #000, transparent 38px); }
.canvas .tab-on { border-top: 1px solid #0a84ff; width: 224px; }
.canvas .plus { margin: 8px 0 0 10px; }
.canvas .navbar { height: 41px; flex: none; padding-top: 5px; }
.urlwide { height: 30px; padding: 1px 0 0; border: 1px solid #bdbdbf; border-width: 1px 0; background: #fff; line-height: 28px; overflow: hidden; }
.urlwide .url { margin-left: -8px; }
.quiz.wide { width: 1142px; height: 566px; flex: none; margin: 8px 0 0; border-width: 2px 0; border-radius: 0; }
.vscroll { width: 16px; background: #f0f0f0; display: flex; flex-direction: column; }
.vscroll i { height: 634px; background: #cdcdcd; }
.end { margin-top: auto; }
.hscroll { height: 16px; flex: none; display: flex; background: #f0f0f0; padding-left: 1px; }
.hscroll i { width: 442px; background: #cdcdcd; }
.hscroll .end { margin: 0 17px 0 auto; }
.status { height: 27px; flex: none; display: flex; background: #f0f0f0; border-top: 1px solid #d7d7d7; border-bottom: 1px solid #a0a0a0; }
.cell { width: 156px; margin: 3px 0 2px; display: flex; align-items: center; padding-left: 5px; border-right: 1px solid #d7d7d7; }
.c-a { width: 153px; padding-left: 0; }
.c-e { width: 117px; }
.px { margin-left: 4px; }
.zoom { display: flex; align-items: center; margin-left: auto; }

/* Taskbar */
.taskbar { grid-column: 1 / 3; display: flex; background: linear-gradient(90deg, #202327 0, #1f2326 50%, #1d2025 70%, #252c37 84%, #222326 90%, #202021 100%); color: #fff; }
.start { width: 48px; display: grid; place-items: center; }
.search { width: 344px; display: flex; align-items: center; gap: 10px; padding-left: 11px; background: #f2f2f2; border: 1px solid #bdbdbd; color: #333; font: 14.5px/20px "Noto Sans", sans-serif; letter-spacing: -.32px; white-space: nowrap; }
.apps { display: flex; }
.app { width: 49.15px; height: 40px; display: grid; place-items: center; }
.run { background: linear-gradient(#76b9ed, #76b9ed) center bottom / 40px 2px no-repeat; }
.active { background: linear-gradient(#76b9ed, #76b9ed) center bottom / 48px 2px no-repeat, #4b4d50; }
.wp { font: bold 12px "Liberation Serif", serif; fill: #e07b28; }
.tray { margin-left: auto; display: flex; align-items: center; padding-right: 9px; margin-right: 4px; border-right: 1px solid #777; }
.clock { width: 72px; margin-right: 10px; display: flex; flex-direction: column; align-items: center; font: 11.5px/18px "Noto Sans", sans-serif; letter-spacing: -.35px; white-space: nowrap; }
.badge { font: bold 12px "Liberation Sans", sans-serif; fill: #fff; }
```
